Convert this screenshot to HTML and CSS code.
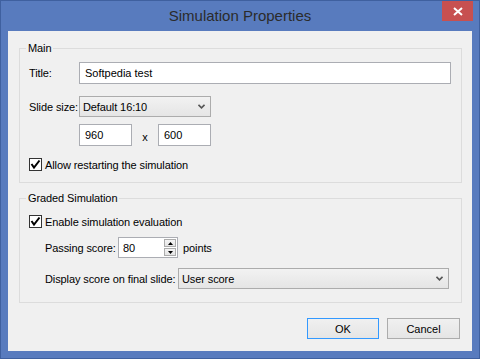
FILE: index.html
```html
<!DOCTYPE html>
<html>
	<head>
		<title>Simulation Properties</title>
		<meta charset="utf-8">
		<link rel="stylesheet" href="styles.css">
	</head>
	<body>
		<div class="window">
			<div class="titlebar">
				<span class="title">Simulation Properties</span>
				<button class="close" type="button">
					<svg width="10" height="9" viewBox="0 0 10 9"><path d="M1 1L9 8M9 1L1 8" stroke="#fff" stroke-width="2"/></svg>
				</button>
			</div>
			<div class="client">
				<fieldset class="group group-main">
					<legend>Main</legend>
					<div class="group-body">
						<div class="row row-title">
							<label class="field-label">Title:</label>
							<input class="textbox textbox-wide" value="Softpedia test">
						</div>
						<div class="row row-slide">
							<label class="field-label">Slide size:</label>
							<div class="combo combo-slide">
								<span>Default 16:10</span>
								<svg width="7" height="5" viewBox="0 0 7 5"><path d="M0.5 0.8L3.5 3.8L6.5 0.8" fill="none" stroke="#555" stroke-width="1.6"/></svg>
							</div>
						</div>
						<div class="row row-size">
							<input class="textbox textbox-size" value="960">
							<span class="times">x</span>
							<input class="textbox textbox-size" value="600">
						</div>
						<div class="row row-check">
							<span class="check"><svg width="11" height="11" viewBox="0 0 11 11"><path d="M1.5 5L4 8.5L9.5 1.5" fill="none" stroke="#000" stroke-width="2"/></svg></span>
							<label>Allow restarting the simulation</label>
						</div>
					</div>
				</fieldset>
				<fieldset class="group group-graded">
					<legend>Graded Simulation</legend>
					<div class="group-body">
						<div class="row row-check-eval">
							<span class="check"><svg width="11" height="11" viewBox="0 0 11 11"><path d="M1.5 5L4 8.5L9.5 1.5" fill="none" stroke="#000" stroke-width="2"/></svg></span>
							<label>Enable simulation evaluation</label>
						</div>
						<div class="row row-pass">
							<label class="label-pass">Passing score:</label>
							<div class="spin">
								<input value="80">
								<div class="spin-buttons">
									<span class="spin-btn"><svg width="5" height="3" viewBox="0 0 5 3"><path d="M2.5 0L5 3H0Z" fill="#000"/></svg></span>
									<span class="spin-btn"><svg width="5" height="3" viewBox="0 0 5 3"><path d="M0 0H5L2.5 3Z" fill="#000"/></svg></span>
								</div>
							</div>
							<span class="units">points</span>
						</div>
						<div class="row row-score">
							<label class="label-score">Display score on final slide:</label>
							<div class="combo combo-score">
								<span>User score</span>
								<svg width="7" height="5" viewBox="0 0 7 5"><path d="M0.5 0.8L3.5 3.8L6.5 0.8" fill="none" stroke="#555" stroke-width="1.6"/></svg>
							</div>
						</div>
					</div>
				</fieldset>
				<div class="actions">
					<button class="btn btn-default" type="button">OK</button>
					<button class="btn btn-cancel" type="button">Cancel</button>
				</div>
			</div>
		</div>
	</body>
</html>
```

FILE: styles.css
```css
* {
	box-sizing: border-box;
	margin: 0;
	padding: 0;
}
body {
	width: 480px;
	height: 359px;
	font-family: 'Liberation Sans', Arial, sans-serif;
	font-size: 11px;
	letter-spacing: -0.1px;
	color: #000;
	background: #587bbe;
}
.window {
	width: 480px;
	height: 359px;
	border: 1px solid #3f609f;
	background: #587bbe;
	display: flex;
	flex-direction: column;
}

/* title bar */
.titlebar {
	height: 30px;
	flex: none;
	display: grid;
	grid-template-columns: 1fr auto 1fr;
}
.title {
	grid-column: 2;
	font-size: 15px;
	line-height: 30px;
	letter-spacing: 0;
	color: #2b2b2b;
}
.close {
	grid-column: 3;
	justify-self: end;
	align-self: start;
	width: 31px;
	height: 20px;
	margin-right: 6px;
	border: none;
	background: #c75050;
	display: flex;
	align-items: center;
	justify-content: center;
}

/* client area */
.client {
	flex: 1;
	margin: 0 7px 7px;
	padding: 10px 10px 0 11px;
	background: #f0f0f0;
	display: flex;
	flex-direction: column;
}
.group {
	border: 1px solid #dcdcdc;
	min-width: 0;
}
.group legend {
	margin-left: 6px;
	padding: 0 2px;
	line-height: 14px;
}
.group-body {
	display: flex;
	flex-direction: column;
	padding: 7px 10px 11px 9px;
}
.group-graded {
	margin-top: 8px;
}
.group-graded .group-body {
	padding: 10px 10px 13px 9px;
}

.row {
	display: flex;
	align-items: center;
}
.field-label {
	width: 50px;
	flex: none;
}
.row-title { margin-top: 0; }
.row-slide { margin-top: 12px; }
.row-size {
	margin-top: 7px;
	padding-left: 50px;
}
.row-check { margin-top: 12px; }
.row-pass {
	margin-top: 9px;
	padding-left: 16px;
}
.row-score {
	margin-top: 10px;
	padding-left: 16px;
}

.textbox {
	height: 22px;
	border: 1px solid #abadb3;
	background: #fff;
	padding: 0 5px;
	font: inherit;
	color: #000;
	outline: none;
}
.textbox-wide { width: 372px; }
.textbox-size { width: 53px; }
.times {
	width: 26px;
	text-align: center;
	padding-top: 3px;
}

.combo {
	height: 21px;
	border: 1px solid #acacac;
	background: linear-gradient(#f2f2f2, #e5e5e5);
	display: flex;
	align-items: center;
	justify-content: space-between;
	padding: 0 5px 0 3px;
}
.combo-slide { width: 132px; }
.combo-score { width: 271px; }

.check {
	width: 13px;
	height: 13px;
	flex: none;
	border: 1px solid #333;
	background: #fff;
	margin-right: 3px;
	display: flex;
}

.label-pass {
	width: 73px;
	flex: none;
}
.label-score {
	width: 133px;
	flex: none;
	white-space: nowrap;
}
.spin {
	width: 60px;
	height: 21px;
	border: 1px solid #abadb3;
	background: #fff;
	display: flex;
}
.spin input {
	flex: 1;
	min-width: 0;
	border: none;
	padding-left: 4px;
	font: inherit;
	outline: none;
	background: transparent;
}
.spin-buttons {
	width: 12px;
	margin: 1px 1px 1px 0;
	display: flex;
	flex-direction: column;
	gap: 1px;
}
.spin-btn {
	flex: 1;
	border: 1px solid #acacac;
	background: linear-gradient(#f4f4f4, #e4e4e4);
	display: flex;
	align-items: center;
	justify-content: center;
}
.units {
	margin-left: 5px;
}

/* buttons */
.actions {
	display: flex;
	justify-content: flex-end;
	gap: 8px;
	margin-top: 15px;
	padding-right: 2px;
}
.btn {
	width: 73px;
	height: 21px;
	border: 1px solid #acacac;
	background: linear-gradient(#f0f0f0, #e5e5e5);
	font: inherit;
	color: #000;
}
.btn-default {
	width: 72px;
	border-color: #3399ff;
}
```
